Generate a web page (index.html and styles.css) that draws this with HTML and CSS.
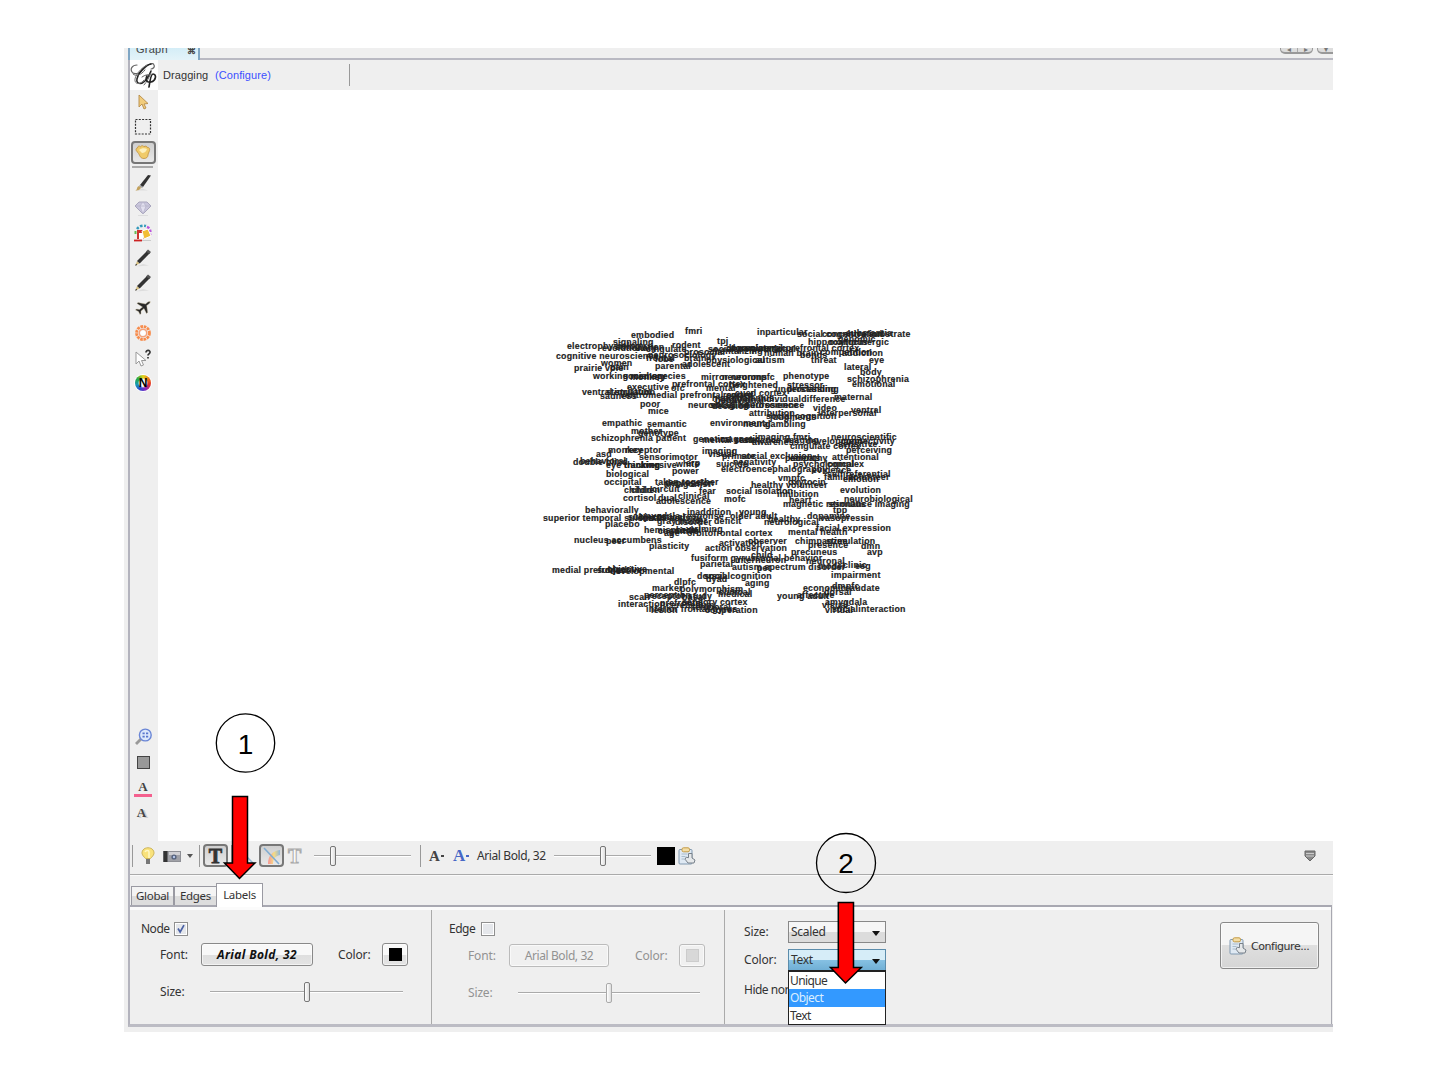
FILE: index.html
```html
<!DOCTYPE html>
<html lang="en">
<head>
<meta charset="utf-8">
<title>Graph</title>
<link rel="stylesheet" href="styles.css">
</head>
<body>
<svg width="0" height="0" class="defs" aria-hidden="true">
  <defs>
    <symbol id="pencil" viewBox="0 0 18 18"><path d="M2 17.500 15 16.500 9 15z" fill="#ddd"/><path d="M1.500 16.500 3 12 5.500 14.500z" fill="#d5bd7b"/><path d="M3 12 13 2l3 2L5.700 14.600z" fill="#333"/><path d="M12 2.500l2-2 3 2.500-1.700 2z" fill="#555"/><path d="M1.200 16.800l.8-2 1.200 1.200z" fill="#222"/></symbol>
    <symbol id="clip" viewBox="0 0 18 18"><rect x="1" y="2.500" width="13" height="14.500" rx="1" fill="#dfe9f3" stroke="#8199b0"/><rect x="4" y=".8" width="7.500" height="4" rx="1.500" fill="#f3dda6" stroke="#c49b45"/><path d="M3.500 7h6M3.500 9.500h4M3.500 12h3" stroke="#a9bccc"/><path d="M10.500 6.500v4.200l-2.300-.5-1.200 2 3 3.800h6l1-3-3-2v-4.500z" fill="#e5e8ea" stroke="#78818a"/></symbol>
    <linearGradient id="rain"><stop stop-color="#f77"/><stop offset=".5" stop-color="#fd6"/><stop offset="1" stop-color="#7ad"/></linearGradient>
  </defs>
</svg>
<main class="window">
  <header class="tabstrip">
    <div class="doc-tab"><span>Graph</span><span class="close">⌘</span></div>
    <div class="nav"><i>◂</i><i>▸</i></div><div class="nav single"><i>▾</i></div>
  </header>
  <div class="frame">
    <div class="modebar">
      <svg class="logo" viewBox="0 0 28 30"><g fill="none" stroke="#222" stroke-linecap="round"><path d="M7 5C2 5 0 9 2 12c2 3 8 2 12-3 4-5 9-7 10-4 1 2-1 4-3 4" stroke="#666" stroke-width="1.200"/><path d="M21 4C15 5 8 13 7 19c-1 5 4 6 8 2 3-3 5-7 6-10" stroke-width="1.500"/><path d="M17 5C11 8 4 16 5 21c1 4 6 3 9-1" stroke="#777"/><path d="M3 14c3 3 8 1 12-4M12 17c3-2 6-3 8-2M14 25c3-3 5-8 7-12" stroke="#666"/><path d="M17 16c-2 4 0 7 4 6 5-1 6-8 2-8-2 0-3 6-4 13" stroke-width="1.700"/></g></svg>
      <span class="mode">Dragging</span><span class="link">(Configure)</span><i class="vsep mode-sep"></i>
    </div>
    <div class="body">
      <nav class="tools">
        <div class="tool"><svg viewBox="0 0 18 18"><path d="M5 2v12l3-3 2 5 2-1-2-4 4-.5z" fill="#f1cc7c" stroke="#b68b48" stroke-width=".9"/></svg></div>
        <div class="tool"><svg viewBox="0 0 18 18"><rect x="1.500" y="1.500" width="15" height="14.500" fill="none" stroke="#333" stroke-width="1.200" stroke-dasharray="2 1.300"/></svg></div>
        <div class="tool"><span class="pressed"><svg viewBox="0 0 18 18"><path d="M4 9.500C1.500 8 1.500 5 3.500 5c0-2 2-2.500 3-1.300 1-1.500 3-1.200 3.500 0 1.200-1 3-.7 3.300.8 2-.3 2.700 1.500 2.200 3-.5 2-1.500 3-1.500 4.500 0 2-1.500 3.500-4 3.500-4 0-4-3-6-6z" fill="#f0cb6a" stroke="#c0913e" stroke-width=".8"/><path d="M5 7c2-2 6-2.500 8-1-1 3-3 4-5 4z" fill="#fdf0bd"/></svg></span></div>
        <i class="hsep"></i>
        <div class="tool"><svg viewBox="0 0 18 18"><path d="M2 16.500h12l-6-2z" fill="#ddd"/><path d="M1 16.500c3-.2 1-3.500 4-4.500l2 1.500c-1 3-4 3-6 3z" fill="#c3a25d"/><path d="M6 11 14 1l3 .5L9 13z" fill="#333"/><path d="M5 12l1-1 3 2-1 1z" fill="#999"/></svg></div>
        <div class="tool"><svg viewBox="0 0 18 18"><path d="M5 3h8l4 4-8 8-8-8z" fill="#c9c6dc" stroke="#a9a6bd"/><path d="M1.500 7h15M6 7l3 8 3-8-3-4z" fill="#e2e0ef" stroke="#b4b1c8" stroke-width=".7"/><path d="M4 16.500h10" stroke="#ddd"/></svg></div>
        <div class="tool"><svg viewBox="0 0 18 18"><path d="M3 5a8 8 0 0 1 9-3" fill="none" stroke="#39b" stroke-width="2.500" stroke-dasharray="2.500 1.500"/><path d="M13 3c3 1 4 4 3 8" fill="none" stroke="#b5d" stroke-width="2.500" stroke-dasharray="2.500 1.500"/><path d="M1.500 10V7" stroke="#6b5" stroke-width="2"/><path d="M3 6h7v9H3z" fill="#c33"/><path d="M5 9h4v6H5z" fill="#fff"/><path d="M8 7l6-2 3 7-7 3z" fill="#f1bd36" stroke="#fff"/><path d="M0 16.500h8" stroke="#c22" stroke-width="1.800"/><path d="M8 16.500h9" stroke="#ccc"/></svg></div>
        <div class="tool"><svg><use href="#pencil"/></svg></div>
        <div class="tool"><svg><use href="#pencil"/></svg></div>
        <div class="tool"><svg viewBox="0 0 18 18"><path d="M16.500 3c-1-1-2.500-.3-5 2L4 3.500l-1 1L8.500 8l-3 2.500L2.500 10l-1 1 3 1.500 1.500 3 1-1 0-2.500 3-2.500 2.500 5 1.200-1-1-7c3.500-2.500 3.800-3 2.800-4z" fill="#282828" stroke="#c5b892" stroke-width=".4"/></svg></div>
        <div class="tool"><svg viewBox="0 0 18 18"><g fill="none" stroke="#f78b4b"><circle cx="9" cy="9" r="6.500" stroke-width="2.800" stroke-dasharray="2.600 .8"/><circle cx="9" cy="9" r="3.800" stroke="#f6a27a" stroke-width="1.500"/></g><circle cx="9" cy="9" r="2.500" fill="#fff"/></svg></div>
        <div class="tool"><svg viewBox="0 0 18 18"><path d="M2 3v12l3-3 2 5 2.500-1-2-4.500H12z" fill="#fff" stroke="#999"/><path d="M12 3.500c0-3 4.500-2.500 4 0-.2 1.500-2 1.300-2 3M14 8v1.500" fill="none" stroke="#333" stroke-width="1.700"/></svg></div>
        <div class="tool n-tool"><span class="wheel">N</span></div>
        <div class="spacer"></div>
        <div class="tool"><svg viewBox="0 0 18 18"><path d="M2 16l5-5" stroke="#999" stroke-width="2.800"/><circle cx="11.300" cy="7" r="5.900" fill="#dce8fb" stroke="#6a86d6" stroke-width="1.400"/><path d="M8.500 4.500h2.200v1.800H8.500zM12 4.500h2.200v1.800H12zM8.500 7.700h2.200v1.800H8.500zM12 7.700h2.200v1.800H12z" fill="#5876ce"/></svg></div>
        <div class="tool"><i class="gray-box"></i></div>
        <div class="tool"><span class="a-pink">A</span></div>
        <div class="tool"><span class="a-shadow">A</span></div>
        <div class="tool-foot"></div>
      </nav>
      <svg class="canvas" viewBox="158 90 1175 751">
        <g class="labels">
<text x="685" y="334">fmri</text><text x="631" y="338">embodied</text><text x="757" y="335">inparticular</text><text x="797" y="337">social cognitive</text><text x="822" y="337">concentration</text><text x="846" y="336">substantia</text><text x="869" y="337">substrate</text>
<text x="717" y="344">tpj</text><text x="613" y="345">signaling</text><text x="672" y="348">rodent</text><text x="567" y="349">electrophysiology</text><text x="602" y="351">evolutionary</text><text x="615" y="350">stimulation</text><text x="646" y="352">cingulate</text><text x="808" y="345">hippocampus</text><text x="829" y="345">oxytocinergic</text><text x="838" y="342">genomic</text><text x="708" y="352">social</text><text x="726" y="351">dopaminergic</text><text x="730" y="351">dorsolateral prefrontal cortex</text><text x="733" y="352">computational</text>
<text x="556" y="359">cognitive neuroscience</text><text x="648" y="358">neurosociology</text><text x="684" y="355">prosocial</text><text x="764" y="356">human brain</text><text x="712" y="354">mentalizing</text><text x="800" y="358">bonds</text><text x="820" y="355">competition</text><text x="842" y="356">addiction</text><text x="646" y="361">frontal</text><text x="655" y="362">lobe</text><text x="684" y="361">brain</text><text x="706" y="363">physiological</text><text x="755" y="363">autism</text><text x="811" y="363">threat</text><text x="869" y="363">eye</text>
<text x="601" y="366">women</text><text x="574" y="371">prairie vole</text><text x="610" y="370">pain</text><text x="655" y="369">parental</text><text x="682" y="367">adolescent</text><text x="844" y="370">lateral</text><text x="860" y="375">body</text><text x="593" y="379">working memory</text><text x="623" y="379">social species</text><text x="630" y="380">monkey</text><text x="701" y="380">mirror neurons</text><text x="722" y="380">neuron</text><text x="753" y="380">mpfc</text><text x="783" y="379">phenotype</text><text x="847" y="382">schizophrenia</text><text x="852" y="387">emotional</text>
<text x="672" y="387">prefrontal cortex</text><text x="627" y="390">executive</text><text x="671" y="391">ofc</text><text x="706" y="391">mental</text><text x="729" y="388">heightened</text><text x="787" y="388">stressor</text><text x="775" y="392">understanding</text><text x="787" y="392">processing</text><text x="582" y="395">ventral striatum</text><text x="606" y="395">stimulation</text><text x="600" y="399">sadness</text><text x="620" y="398">ventromedial prefrontal cortex</text><text x="712" y="401">hypothalamus</text><text x="735" y="396">cued cortex</text><text x="721" y="403">individual</text><text x="758" y="402">individualdifference</text><text x="834" y="400">maternal</text><text x="723" y="398">reward</text><text x="715" y="403">behavior</text>
<text x="640" y="407">poor</text><text x="688" y="408">neuroimaging</text><text x="710" y="408">social neuroscience</text><text x="712" y="409">decision</text><text x="745" y="408">neuroscience</text><text x="813" y="411">video</text><text x="851" y="413">ventral</text><text x="648" y="414">mice</text><text x="749" y="416">attribution</text><text x="818" y="416">interpersonal</text><text x="766" y="419">social cognition</text><text x="770" y="420">judgments</text>
<text x="602" y="426">empathic</text><text x="647" y="427">semantic</text><text x="710" y="426">environment</text><text x="743" y="427">neural</text><text x="765" y="427">gambling</text><text x="631" y="434">mother</text><text x="638" y="436">genotype</text><text x="591" y="441">schizophrenia patient</text><text x="693" y="442">genetics</text><text x="702" y="443">mental state</text><text x="720" y="442">magnetic</text><text x="755" y="440">imaging fmri</text><text x="735" y="443">resonance imaging</text><text x="752" y="445">awareness</text><text x="806" y="444">development</text><text x="831" y="440">neuroscientific</text><text x="841" y="444">connectivity</text><text x="790" y="449">cingulate cortex</text><text x="838" y="447">sensitive</text><text x="846" y="453">perceiving</text>
<text x="608" y="453">monkey</text><text x="625" y="453">receptor</text><text x="702" y="454">imaging</text><text x="708" y="457">visual</text><text x="596" y="457">asd</text><text x="639" y="460">sensorimotor</text><text x="722" y="459">primate</text><text x="741" y="459">social exclusion</text><text x="785" y="461">patients</text><text x="790" y="461">empathy</text><text x="832" y="460">attentional</text><text x="573" y="465">double blind</text><text x="580" y="464">behavioral</text><text x="606" y="468">eye tracking</text><text x="624" y="468">thinking</text><text x="640" y="468">aversive</text><text x="676" y="467">white</text><text x="686" y="466">erp</text><text x="716" y="467">suicide</text><text x="733" y="465">negativity</text><text x="793" y="467">psychological</text><text x="827" y="467">complex</text>
<text x="606" y="477">biological</text><text x="672" y="474">power</text><text x="721" y="472">electroencephalography</text><text x="812" y="473">evidence</text><text x="604" y="485">occipital</text><text x="655" y="485">taken together</text><text x="664" y="487">antagonist</text><text x="665" y="486">depression</text><text x="778" y="481">vmpfc</text><text x="788" y="485">oxytocin</text><text x="824" y="480">familiar</text><text x="827" y="477">self referential</text><text x="848" y="480">volunteer</text><text x="843" y="482">emotion</text><text x="624" y="493">children</text><text x="631" y="493">child</text><text x="652" y="492">circuit</text><text x="699" y="494">fear</text><text x="726" y="494">social isolation</text><text x="751" y="488">healthy volunteer</text><text x="777" y="497">inhibition</text><text x="840" y="493">evolution</text>
<text x="623" y="501">cortisol</text><text x="658" y="501">dual</text><text x="678" y="499">clinical</text><text x="656" y="504">adolescence</text><text x="724" y="502">mofc</text><text x="789" y="503">heart</text><text x="783" y="507">magnetic resonance imaging</text><text x="828" y="507">stimulus</text><text x="844" y="502">neurobiological</text><text x="833" y="513">tpp</text><text x="585" y="513">behaviorally</text><text x="687" y="515">inaddition</text><text x="739" y="515">young</text><text x="543" y="521">superior temporal sulcus</text><text x="628" y="520">subjects</text><text x="638" y="519">amygdala response</text><text x="640" y="521">insula activity</text><text x="652" y="520">cortical</text><text x="605" y="527">placebo</text><text x="657" y="524">gray matter</text><text x="675" y="525">disorder</text><text x="714" y="524">deficit</text><text x="730" y="519">older adult</text><text x="764" y="525">neurological</text><text x="768" y="522">healthy</text><text x="807" y="519">dopamine</text><text x="820" y="521">vasopressin</text>
<text x="644" y="533">hemisphere</text><text x="658" y="534">cognitive</text><text x="675" y="533">social</text><text x="689" y="532">priming</text><text x="664" y="536">age</text><text x="687" y="536">orbitofrontal cortex</text><text x="788" y="535">mental health</text><text x="816" y="531">facial expression</text><text x="574" y="543">nucleus accumbens</text><text x="606" y="544">peer</text><text x="649" y="549">plasticity</text><text x="719" y="546">activation</text><text x="748" y="544">observer</text><text x="795" y="544">chimpanzee</text><text x="826" y="544">stimulation</text><text x="808" y="548">presence</text><text x="861" y="549">dmn</text><text x="705" y="551">action observation</text><text x="791" y="555">precuneus</text><text x="867" y="555">avp</text>
<text x="691" y="561">fusiform gyrus</text><text x="735" y="563">interneuron</text><text x="755" y="561">social behavior</text><text x="751" y="558">child</text><text x="806" y="564">neuronal</text><text x="700" y="567">parietal</text><text x="732" y="570">autism spectrum disorder</text><text x="757" y="571">pet</text><text x="818" y="569">model</text><text x="843" y="568">clinic</text><text x="855" y="569">eeg</text><text x="831" y="578">impairment</text><text x="552" y="573">medial prefrontal</text><text x="597" y="573">subjective</text><text x="607" y="572">objective</text><text x="610" y="574">developmental</text>
<text x="697" y="579">dorsal</text><text x="704" y="579">socialcognition</text><text x="706" y="582">dyad</text><text x="674" y="585">dlpfc</text><text x="745" y="586">aging</text><text x="652" y="591">marker</text><text x="680" y="592">polymorphism</text><text x="803" y="591">economic</text><text x="832" y="589">dmpfc</text><text x="845" y="591">caudate</text><text x="629" y="600">scan</text><text x="644" y="598">perception</text><text x="648" y="599">receptor study</text><text x="682" y="600">basal</text><text x="718" y="597">medical</text><text x="719" y="595">clinical</text><text x="777" y="599">young adult</text><text x="797" y="598">affective</text><text x="824" y="595">dorsal</text>
<text x="618" y="607">interaction</text><text x="660" y="606">prefrontal</text><text x="682" y="605">sensory cortex</text><text x="666" y="608">cerebellum</text><text x="646" y="612">inferior frontal gyrus</text><text x="651" y="613">lesion</text><text x="705" y="613">cooperation</text><text x="692" y="610">temporal</text><text x="825" y="605">amygdala</text><text x="822" y="608">visual</text><text x="825" y="613">virtual</text><text x="832" y="612">socialinteraction</text>
        </g>
      </svg>
    </div>
    <div class="quickbar">
      <i class="vsep s1"></i>
      <svg class="bulb" viewBox="0 0 14 18"><path d="M4.500 11.500C1 8 0 6 2 3c2-3 8-3 10 0 2 3 1 5-2.500 8.500z" fill="#f9e27b" stroke="#cdb55b"/><path d="M4 5c1-2 4-2 4 0v6" fill="none" stroke="#fff8c5" stroke-width="1.500"/><path d="M5 12h4v5H5z" fill="#777"/></svg>
      <svg class="camera" viewBox="0 0 18 14"><rect x=".5" y="2.500" width="17" height="10" fill="#a0a1a7" stroke="#8e8f95"/><path d="M.5 2h4v11h-4z" fill="#333"/><path d="M6 3h11v3H6z" fill="#d0d0d4"/><circle cx="11" cy="8" r="2.600" fill="#55627c"/><circle cx="11" cy="8" r="1.200" fill="#b6c7eb"/></svg>
      <i class="caret"></i><i class="vsep s2"></i>
      <span class="pressed p1"><b class="tee">T</b></span><i class="vsep s3"></i>
      <svg class="edge-ico" viewBox="0 0 18 18"><path d="M2 2l14 14" stroke="#8db6d4" stroke-width="1.500"/></svg>
      <span class="pressed p2"><svg viewBox="0 0 18 18"><path d="M5 17C5 9 9 4 17 3v5c-5 1-7 4-7 9z" fill="url(#rain)" opacity=".75"/><path d="M1 1l15 16" stroke="#80acd2" stroke-width="1.600"/></svg></span>
      <b class="tee hollow">T</b>
      <span class="slider q1"><i></i></span><i class="vsep s4"></i>
      <span class="a-menu">A<i></i></span><span class="a-menu blue">A<i></i></span>
      <span class="font-name">Arial Bold, 32</span>
      <span class="slider q2"><i></i></span>
      <i class="black"></i><svg class="clip"><use href="#clip"/></svg>
      <svg class="expander" viewBox="0 0 12 12"><path d="M1 1h10v5l-5 5-5-5z" fill="#8a8a8a" stroke="#666"/><path d="M2 3.500h8M2 6h8" stroke="#ddd" stroke-width=".8"/></svg>
    </div>
    <div class="tabs"><span>Global</span><span>Edges</span><span class="on">Labels</span></div>
    <section class="panel">
      <div class="col node">
        <div class="row head"><span>Node</span><svg class="check" viewBox="0 0 14 14"><path d="M3.500 6.500l2.500 4 4.500-8" fill="none" stroke="#4b62a5" stroke-width="2"/></svg></div>
        <div class="row font"><span class="lab">Font:</span><span class="btn bold">Arial Bold, 32</span><span class="lab2">Color:</span><span class="btn sw"><i></i></span></div>
        <div class="row size"><span class="lab">Size:</span><span class="slider"><i></i></span></div>
      </div>
      <div class="col edge">
        <div class="row head"><span>Edge</span><i class="check"></i></div>
        <div class="row font off"><span class="lab">Font:</span><span class="btn">Arial Bold, 32</span><span class="lab2">Color:</span><span class="btn sw"><i></i></span></div>
        <div class="row size off"><span class="lab">Size:</span><span class="slider"><i></i></span></div>
      </div>
      <div class="col opts">
        <div class="fields">
          <div class="field"><span>Size:</span><div class="combo"><b>Scaled</b><i></i></div></div>
          <div class="field"><span>Color:</span><div class="combo open"><b>Text</b><i></i><div class="menu"><p>Unique</p><p class="sel">Object</p><p>Text</p></div></div></div>
          <div class="field hide"><span>Hide nor</span></div>
        </div>
        <div class="configure"><svg class="clip"><use href="#clip"/></svg><span>Configure...</span></div>
      </div>
    </section>
  </div>
</main>
<svg class="notes" viewBox="0 0 1440 1080">
  <g fill="none" stroke="#000" stroke-width="1.300"><circle cx="245.500" cy="743" r="29.200"/><circle cx="846" cy="863" r="29.500"/></g>
  <g fill="#f00" stroke="#000" stroke-width="1.500"><path d="M232.500 796.500h15v66.500h7.500l-15.500 15.500-15-15.500h8z"/><path d="M838.300 902.500h15.200V967.500h7.800l-15.800 15.500-15-15.500h7.800z"/></g>
  <g class="num"><text x="245.500" y="753.500">1</text><text x="846" y="873">2</text></g>
</svg>
</body>
</html>
```
FILE: styles.css
```css
* { box-sizing: border-box; }
body { margin: 0; width: 1440px; height: 1080px; overflow: hidden; background: #fff; padding: 48px 0 0 124px; font: 12px/16px "Noto Sans", "Open Sans", sans-serif; color: #333; }
i { font-style: normal; flex: none; }
svg { flex: none; display: block; }
.defs { position: absolute; }
.window { width: 1209px; height: 984px; background: #efefef; padding-left: 4px; overflow: hidden; display: flex; flex-direction: column; }
.tabstrip { height: 12px; display: flex; border-bottom: 2px solid #b9b9c2; align-items: flex-end; flex: none; }
.doc-tab { width: 72px; height: 12px; margin-bottom: -2px; border: solid #7fa6c4; border-width: 0 2px 0 2px; background: linear-gradient(#d4edf7, #e4f3f9); display: flex; align-items: flex-end; justify-content: space-between; padding: 0 2px 0 6px; font: 11px/12px "Liberation Sans", sans-serif; letter-spacing: .25px; color: #444; overflow: hidden; }
.doc-tab span { height: 17px; }
.doc-tab .close { font-size: 9px; font-weight: bold; height: 15px; }
.nav { display: flex; width: 33px; height: 7px; margin: 0 0 4px auto; border: solid #999; border-width: 0 1px 2px; border-radius: 0 0 5px 5px; background: #ddd; overflow: hidden; }
.nav i { width: 16px; font-size: 8px; line-height: 3px; text-align: center; color: #777; }
.nav i + i { border-left: 1px solid #aaa; }
.nav.single { width: 20px; margin: 0 -4px 4px 4px; }
.frame { width: 1205px; height: 967px; border-left: 2px solid #b3b3bd; border-bottom: 3px solid #bcbcc4; display: flex; flex-direction: column; flex: none; }
.modebar { height: 30px; flex: none; display: flex; align-items: center; font: 11px/16px "Liberation Sans", sans-serif; letter-spacing: .08px; }
.logo { width: 28px; height: 30px; background: #fff; }
.mode { margin-left: 5px; width: 52px; }
.link { color: #3c4fff; width: 62px; }
.vsep { width: 1px; height: 22px; background: #999; }
.mode-sep { margin-left: 72px; }
.body { display: flex; height: 751px; flex: none; }
.tools { width: 28px; display: flex; flex-direction: column; align-items: center; }
.tool { width: 28px; height: 25px; flex: none; display: flex; align-items: center; justify-content: center; padding: 0 2px 1px 0; }
.tool svg { width: 18px; height: 18px; }
.pressed { width: 25px; height: 23px; flex: none; border: 2px solid #777; border-radius: 4px; background: linear-gradient(#cfcfcf, #e9e9e9); display: flex; align-items: center; justify-content: center; }
.pressed svg { width: 18px; height: 18px; }
.hsep { width: 21px; height: 2px; margin: 1px 3px 3px 0; background: #aaa; }
.wheel { width: 16px; height: 16px; border-radius: 50%; background: radial-gradient(#fff 30%, transparent 45%), conic-gradient(#e2d51b, #ef7b17, #e32f29, #8d29bd, #2b45d1, #159bb4, #27a844, #e2d51b); display: flex; align-items: center; justify-content: center; font: bold 12px "Liberation Sans", sans-serif; color: #000; box-shadow: 0 0 0 1px #fff; }
.spacer { flex: 1; }
.gray-box { width: 13px; height: 13px; border: 1px solid #444; background: #999; }
.a-pink, .a-shadow { font: bold 13px/13px "Liberation Serif", serif; color: #444; }
.a-pink { width: 18px; text-align: center; border-bottom: 3px solid #f4608e; height: 17px; margin-top: 3px; }
.a-shadow { text-shadow: 2px 1px #ccc; margin-right: 3px; }
.tool-foot { height: 16px; }
.canvas { width: 1175px; height: 751px; background: #fff; }
.labels { font: bold 8.8px "Liberation Sans", sans-serif; letter-spacing: .22px; fill: #222; stroke: #222; stroke-width: .15px; }
.quickbar { height: 34px; flex: none; display: flex; align-items: center; padding-bottom: 4px; border-bottom: 1px solid #aaa; box-shadow: 0 1px #fafafa; }
.s1 { margin-left: 2px; }
.bulb { width: 14px; height: 18px; margin-left: 8px; }
.camera { width: 18px; height: 14px; margin-left: 8px; }
.caret { margin: 0 6px; border: 3.500px solid transparent; border-top: 4px solid #555; border-bottom: 0; }
.p1 { margin-left: 3px; }
.tee { font: bold 20px/18px "Liberation Serif", serif; color: #333; -webkit-text-stroke: .8px #333; }
.hollow { color: #fafafa; -webkit-text-stroke: 1px #aaa; width: 16px; margin-left: 4px; }
.s3 { margin-left: 3px; }
.edge-ico { width: 18px; height: 18px; margin-left: 5px; }
.p2 { margin-left: 4px; }
.slider { flex: none; height: 20px; display: flex; align-items: center; background: linear-gradient(#aaa, #aaa) 0 9px / 100% 1px no-repeat, linear-gradient(#fff, #fff) 0 10px / 100% 1px no-repeat; }
.slider i { width: 6px; height: 20px; border: 1px solid #777; border-radius: 2px; background: linear-gradient(90deg, #fff, #ddd); }
.q1 { width: 97px; margin-left: 10px; padding-left: 16px; }
.s4 { margin-left: 9px; }
.a-menu { width: 16px; margin-left: 8px; display: flex; align-items: center; font: bold 15px/18px "Liberation Serif", serif; color: #444; }
.a-menu i { width: 3px; height: 2px; background: currentColor; margin-left: 1px; }
.a-menu.blue { color: #4767c6; font-size: 17px; }
.font-name { width: 77px; margin-left: 8px; white-space: nowrap; letter-spacing: -.4px; }
.q2 { width: 97px; padding-left: 46px; }
.black { width: 18px; height: 18px; margin: 0 3px 0 6px; background: #000; }
.clip { width: 18px; height: 18px; }
.expander { width: 12px; height: 12px; margin: 0 17px 0 auto; }
.tabs { height: 30px; flex: none; display: flex; align-items: flex-end; padding-left: 1px; font-size: 11.500px; letter-spacing: -.3px; }
.tabs span { width: 43px; height: 19px; line-height: 18px; text-align: center; border: solid #9a9aa2; border-width: 1px 1px 0; background: linear-gradient(#f4f4f4 50%, #ddd 50%); white-space: nowrap; }
.tabs .on { width: 47px; height: 24px; margin: 0 0 -2px -1px; background: #fff; line-height: 21px; position: relative; z-index: 1; }
.panel { height: 119px; width: 1202px; flex: none; border-top: 2px solid #a8a8b1; border-right: 1px solid #a8a8b1; display: flex; box-shadow: inset 0 3px #fbfbfb; padding: 3px 0 0 1px; letter-spacing: -.15px; white-space: nowrap; }
.col { flex: none; }
.node { width: 301px; padding-left: 10px; border-right: 1px solid #aaa; }
.edge { width: 293px; padding-left: 17px; border-right: 1px solid #aaa; }
.row { display: flex; align-items: center; }
.head { height: 32px; padding-top: 5px; }
.head span { width: 33px; letter-spacing: -.5px; }
.edge .head span { width: 32px; }
.check { width: 14px; height: 14px; border: 1px solid #8f8f8f; background: #e5e7eb; box-shadow: inset 0 0 0 1px #fff; }
.font { height: 23px; padding-left: 19px; margin-top: 1px; }
.lab { width: 41px; }
.btn { width: 112px; height: 23px; border: 1px solid #898989; border-radius: 3px; background: linear-gradient(#f8f8f8 50%, #dedede 50%, #e4e4e4); display: flex; align-items: center; justify-content: center; box-shadow: inset 0 0 0 1px #ffffff90; }
.bold { font-weight: bold; font-style: italic; letter-spacing: .35px; color: #111; }
.lab2 { width: 44px; margin-left: 25px; }
.sw { width: 26px; }
.sw i { width: 13px; height: 13px; background: #000; }
.size { height: 20px; margin-top: 16px; padding-left: 19px; }
.node .size .slider { width: 193px; margin-left: 9px; padding-left: 94px; }
.edge .font .btn { width: 100px; }
.edge .font:not(.x) .btn { letter-spacing: -.4px; }
.edge .font .sw { width: 26px; }
.edge .lab2 { margin-left: 26px; }
.edge .font { margin-top: 2px; }
.edge .size .slider { width: 182px; margin-left: 9px; padding-left: 88px; }
.off { color: #929292; }
.off .btn { background: #f0f0f0; border-color: #bbb; }
.off .sw i { background: #d8d8d8; border: 1px solid #ccc; }
.off .slider i { border-color: #aaa; }
.opts { width: 606px; display: flex; padding: 11px 12px 0 19px; justify-content: space-between; }
.field { display: flex; align-items: center; height: 22px; margin-bottom: 6px; }
.field > span { width: 44px; }
.field.hide { margin-top: 8px; letter-spacing: -.5px; }
.combo { width: 98px; height: 22px; border: 1px solid #888; background: linear-gradient(#f6f6f6 50%, #dcdcdc 50%); display: flex; align-items: center; justify-content: space-between; padding: 0 5px 0 2px; position: relative; letter-spacing: -.3px; }
.combo b { font-weight: normal; }
.combo i { margin-top: 3px; border: 4px solid transparent; border-top: 5px solid #111; border-bottom: 0; }
.open { background: linear-gradient(#d6edf8 50%, #86c1e3 50%, #70afd5); border-color: #5b8cab; }
.menu { position: absolute; left: -1px; top: 20px; width: 98px; height: 55px; border: 1px solid #222; border-top-width: 2px; background: #fff; z-index: 2; letter-spacing: -.6px; }
.menu p { margin: 0; height: 17.300px; line-height: 17px; padding-left: 1px; }
.menu .sel { background: #3399ff; color: #dcefff; }
.configure { width: 99px; height: 47px; margin-top: 1px; border: 1px solid #888; border-radius: 3px; background: linear-gradient(#f5f5f5 48%, #dfdfdf 50%, #d5d5d5); box-shadow: inset 0 0 0 1px #ffffffa0; display: flex; align-items: center; gap: 4px; padding-left: 8px; font: 11px "DejaVu Sans", sans-serif; letter-spacing: -.45px; }
.configure span { margin-top: 1px; }
.notes { position: absolute; left: 0; top: 0; width: 1440px; height: 1080px; z-index: 5; pointer-events: none; }
.num { font: 28px "Liberation Sans", sans-serif; text-anchor: middle; }
```
